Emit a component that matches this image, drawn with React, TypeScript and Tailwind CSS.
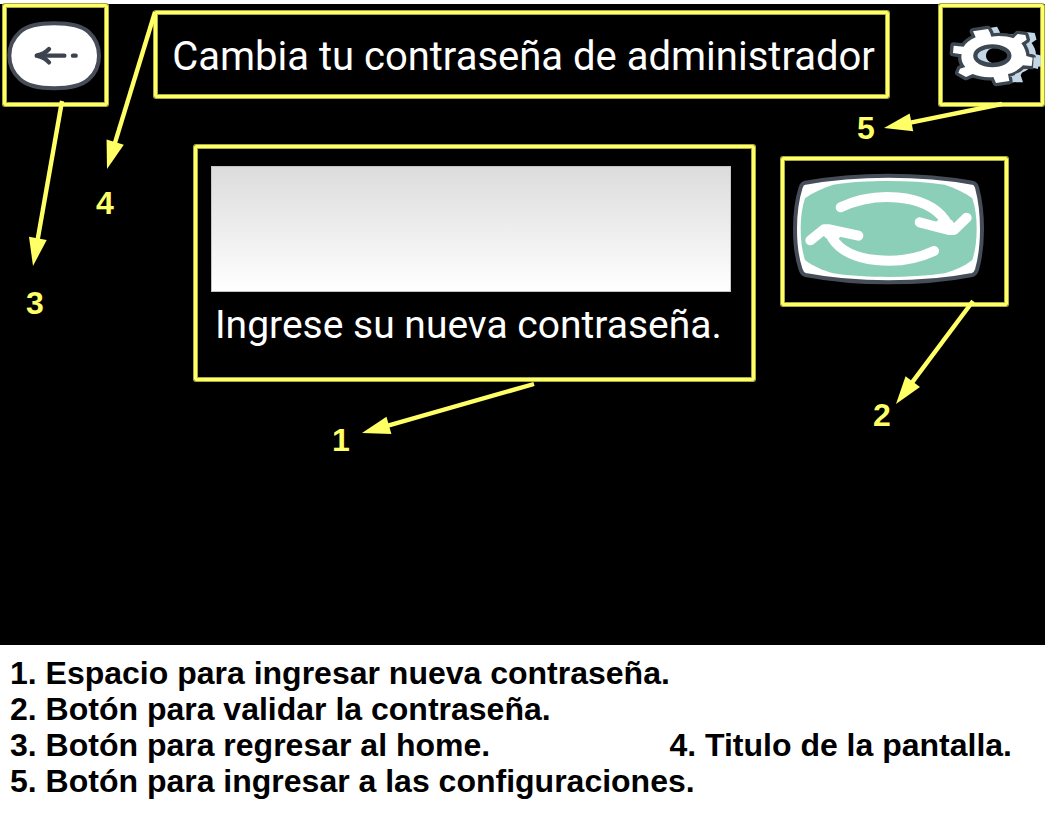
import type { ReactNode } from "react";

type Point = [number, number];

const FRAME =
  "relative border-3 border-[#ffff66] rounded-xs shadow-[0_0_0_1px_#a9a944,inset_0_0_0_1px_#a9a944]";

/** Yellow arrow, drawn in the coordinates of the frame that it belongs to. */
function Arrow({ from, to }: { from: Point; to: Point }) {
  const dx = to[0] - from[0];
  const dy = to[1] - from[1];
  const len = Math.hypot(dx, dy);
  const ux = dx / len;
  const uy = dy / len;
  const bx = to[0] - ux * 28;
  const by = to[1] - uy * 28;
  const head = [to, [bx - uy * 9, by + ux * 9], [bx + uy * 9, by - ux * 9]]
    .map((p) => p.join(","))
    .join(" ");
  return (
    <svg
      aria-hidden="true"
      className="pointer-events-none absolute top-0 left-0 z-10 size-px overflow-visible"
    >
      <line
        x1={from[0]}
        y1={from[1]}
        x2={bx + ux}
        y2={by + uy}
        stroke="#ffff66"
        strokeWidth="4.4"
      />
      <polygon points={head} fill="#ffff66" />
    </svg>
  );
}

function Mark({ className, children }: { className: string; children: ReactNode }) {
  return (
    <span
      className={`pointer-events-none absolute text-[32px] leading-8 font-bold text-[#ffff66] ${className}`}
    >
      {children}
    </span>
  );
}

function BackIcon() {
  return (
    <svg viewBox="18 21 297 288" className="size-full blur-[0.6px]" aria-hidden="true">
      <path
        d="M162 70C208 70 244 76 266 96C288 116 297 141 297 167C297 193 288 218 266 238C244 258 208 265 162 265C116 265 82 258 60 238C38 218 28 193 28 167C28 141 38 116 60 96C82 76 116 70 162 70Z"
        fill="#fff"
        stroke="#464d59"
        strokeWidth="12"
      />
      <g fill="none" stroke="#3c434f" strokeWidth="13" strokeLinecap="round">
        <path d="M110 167H193" />
        <path d="M219 167H227" />
        <path d="M147 147C138 157 123 164 110 167C123 170 138 177 147 187" />
      </g>
    </svg>
  );
}

const GEAR =
  "M219 94L264 87L270 98L274 110C298 106 322 109 340 115L353 102L376 105L380 119L364 130C374 143 379 158 379 168L398 173L395 198L369 196C356 210 340 218 324 222L328 243L288 249L280 231C255 233 235 229 218 222L198 231L175 218L180 206L196 201C186 190 182 176 185 163L159 159L161 137L191 140C198 128 212 118 227 112Z";

function GearIcon() {
  return (
    <svg viewBox="126 21 297 288" className="size-full blur-[0.6px]" aria-hidden="true">
      <path d={GEAR} transform="translate(25 -2)" fill="#c3d6e6" stroke="#c3d6e6" strokeWidth="8" />
      <path d={GEAR} fill="#fff" stroke="#3d4752" strokeWidth="20" strokeLinejoin="round" />
      <path d={GEAR} fill="#fff" />
      <path d="M401 172L418 174L414 207L399 203Z" fill="#c3d6e6" />
      <path d="M345 222L368 214L362 226L369 247L347 247Z" fill="#c3d6e6" />
      <ellipse cx="277" cy="167" rx="49" ry="28" fill="#c3d6e6" />
      <ellipse cx="293" cy="167" rx="35" ry="26" fill="#000" />
      <ellipse cx="277" cy="167" rx="51" ry="28" fill="none" stroke="#3d4752" strokeWidth="13" />
    </svg>
  );
}

function RefreshIcon() {
  return (
    <svg viewBox="42 45 663 429" className="size-full blur-[0.6px]" aria-hidden="true">
      <path
        d="M106 113C185 99 265 92 355 92C445 92 530 99 607 113C616 115 619 120 621 127C631 165 636 205 636 252C636 299 631 339 621 374C618 383 615 388 607 390C530 405 445 412 355 412C265 412 185 405 106 390C98 388 95 383 92 374C80 339 75 299 75 252C75 205 80 165 92 127C94 120 97 115 106 113Z"
        fill="#fff"
        stroke="#454d59"
        strokeWidth="12"
      />
      <path
        d="M190 119C240 111 300 108 355 108C410 108 470 111 524 119C556 129 584 143 607 160C616 187 620 217 620 252C620 287 616 317 607 345C584 363 556 376 524 385C470 393 410 396 355 396C300 396 240 393 190 385C158 376 128 363 105 345C96 317 92 287 92 252C92 217 96 187 105 160C128 143 158 129 190 119Z"
        fill="#8ccfb9"
      />
      <g
        fill="none"
        stroke="#fff"
        strokeWidth="30"
        strokeLinecap="round"
        strokeLinejoin="round"
      >
        <path d="M212 187C310 140 465 142 526 226" />
        <path d="M449 232L536 255H552L590 218" />
        <path d="M492 318C390 366 232 356 186 278" />
        <path d="M121 286L162 253H178L265 272" />
      </g>
      <path d="M490 240L516 212L546 226L562 250Z" fill="#fff" />
      <path d="M222 264L196 292L166 278L150 254Z" fill="#fff" />
    </svg>
  );
}

export default function App() {
  return (
    <div className="bg-white pt-1 font-['Liberation_Sans',Arial,sans-serif] text-black">
      <div className="mr-[11px] bg-black pb-[264px] text-white">
        <header className="flex items-start pr-px pl-[3px]">
          <div className={`${FRAME} h-[102px] w-[105px] shrink-0`}>
            <button type="button" aria-label="Regresar al home" className="block size-full">
              <BackIcon />
            </button>
            <Arrow from={[56, 94]} to={[27, 259]} />
            <Mark className="top-[280px] left-5">3</Mark>
          </div>

          <div
            className={`${FRAME} mt-[7px] mr-[50px] ml-[46px] flex h-[87px] flex-1 items-center justify-center pt-1 pl-1`}
          >
            <h1 className="font-['Roboto',sans-serif] text-[40px] leading-[46px] whitespace-nowrap">
              Cambia tu contraseña de administrador
            </h1>
            <Arrow from={[-2, -2]} to={[-50, 155]} />
            <Mark className="top-[173px] -left-[61px]">4</Mark>
          </div>

          <div className={`${FRAME} h-[102px] w-[105px] shrink-0`}>
            <button type="button" aria-label="Configuraciones" className="block size-full">
              <GearIcon />
            </button>
            <Arrow from={[60, 97]} to={[-58, 121]} />
            <Mark className="top-[105px] -left-[85px]">5</Mark>
          </div>
        </header>

        <main className="flex items-start gap-[26px] pt-[39px] pr-[37px] pl-[194px]">
          <div className={`${FRAME} h-[236px] flex-1 pt-[18px] pr-[21px] pl-[14px]`}>
            <input
              id="password"
              type="password"
              className="block h-[126px] w-full border border-[#c4c4c4] bg-linear-to-b from-[#dcdcdc] to-white px-4 text-[39px] text-black outline-none"
            />
            <label
              htmlFor="password"
              className="mt-[10px] block pl-1 font-['Roboto',sans-serif] text-[39px] leading-[46px] whitespace-nowrap"
            >
              Ingrese su nueva contraseña.
            </label>
            <Arrow from={[337, 236]} to={[165, 285]} />
            <Mark className="top-[276px] left-[135px]">1</Mark>
          </div>

          <div className={`${FRAME} mt-3 h-[149px] w-[227px] shrink-0`}>
            <button type="button" aria-label="Validar la contraseña" className="block size-full">
              <RefreshIcon />
            </button>
            <Arrow from={[189, 141]} to={[112, 244]} />
            <Mark className="top-[239px] left-[89px]">2</Mark>
          </div>
        </main>
      </div>

      <ul className="px-[10px] pt-[10px] pb-4 text-[32px] leading-[36px] font-bold">
        <li>1. Espacio para ingresar nueva contraseña.</li>
        <li>2. Botón para validar la contraseña.</li>
        <li className="flex justify-between pr-[34px]">
          <span>3. Botón para regresar al home.</span>
          <span>4. Titulo de la pantalla.</span>
        </li>
        <li>5. Botón para ingresar a las configuraciones.</li>
      </ul>
    </div>
  );
}
